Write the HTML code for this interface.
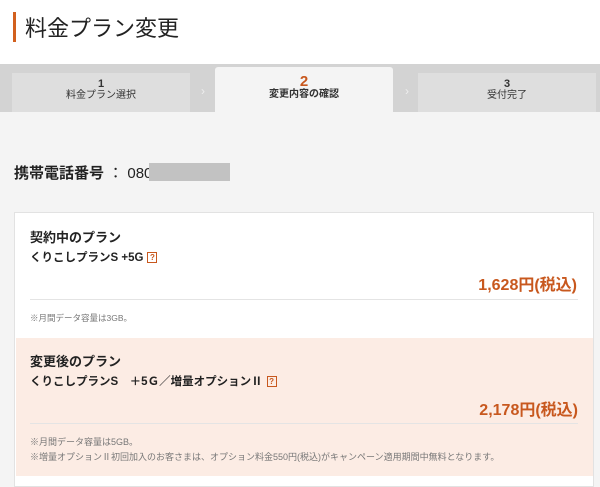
<!DOCTYPE html>
<html><head><meta charset="utf-8"><style>
*{margin:0;padding:0;box-sizing:border-box}
body{width:600px;height:487px;overflow:hidden;background:#f4f4f4;font-family:"Liberation Sans","Noto Sans CJK JP",sans-serif;color:#222;position:relative}
.abs{position:absolute;white-space:nowrap}
.top{position:absolute;left:0;top:0;width:600px;height:64px;background:#fff}
.bar{position:absolute;left:13px;top:12px;width:3px;height:30px;background:#d2601e}
.tabs{position:absolute;left:0;top:64px;width:600px;height:48px;background:#d3d3d3}
.tab{position:absolute;top:9px;height:39px;width:178px;background:#dedede;text-align:center;font-size:10px;line-height:12px;padding-top:5px;color:#333}
.tab b{display:block;font-size:11px}
.act{top:3px;height:45px;background:#f4f4f4;border-radius:3px 3px 0 0;padding-top:7px;font-weight:bold}
.act b{color:#c8581e;font-size:15px;line-height:15px}
.arr{position:absolute;top:20px;color:#eee;font-size:12px}
.card{position:absolute;left:14px;top:212px;width:580px;height:275px;background:#fff;border:1px solid #e2e2e2}
.pink{position:absolute;left:1px;top:125px;width:577px;height:138px;background:#fcece4}
.h{font-size:13px;font-weight:bold}
.p{font-size:11.5px;font-weight:bold}
.pr{font-size:16px;font-weight:bold;color:#c8581e;right:16px}
.n{font-size:8.5px;color:#777}
.hr{position:absolute;left:15px;width:548px;height:1px;background:#e4e4e4}
.q{display:inline-block;width:10px;height:11px;border:1px solid #c8581e;color:#c8581e;font-size:8px;line-height:9px;text-align:center;vertical-align:middle;margin-left:4px}
</style></head><body>
<div class="top"><div class="bar"></div><div class="abs" style="left:25px;top:11px;font-size:22px;color:#222">料金プラン変更</div></div>
<div class="tabs">
<div class="tab" style="left:12px"><b>1</b>料金プラン選択</div>
<div class="arr" style="left:201px">›</div>
<div class="tab act" style="left:215px"><b>2</b>変更内容の確認</div>
<div class="arr" style="left:405px">›</div>
<div class="tab" style="left:418px"><b>3</b>受付完了</div>
</div>
<div class="abs" style="left:14px;top:162px;font-size:15px"><b>携帯電話番号</b> ： 080</div>
<div class="abs" style="left:149px;top:163px;width:81px;height:18px;background:#c2c2c2"></div>
<div class="card">
<div class="abs h" style="left:15px;top:14px">契約中のプラン</div>
<div class="abs p" style="left:15px;top:36px">くりこしプランS +5G<span class="q">?</span></div>
<div class="abs pr" style="top:58px">1,628円(税込)</div>
<div class="hr" style="top:86px"></div>
<div class="abs n" style="left:15px;top:99px">※月間データ容量は3GB。</div>
<div class="pink">
<div class="abs h" style="left:14px;top:13px">変更後のプラン</div>
<div class="abs p" style="left:14px;top:35px">くりこしプランS　＋5Ｇ／増量オプションⅡ<span class="q">?</span></div>
<div class="abs pr" style="top:58px;right:15px">2,178円(税込)</div>
<div class="hr" style="top:85px;left:14px"></div>
<div class="abs n" style="left:14px;top:97px;font-size:9px">※月間データ容量は5GB。</div>
<div class="abs n" style="left:14px;top:112px;font-size:9px">※増量オプションⅡ初回加入のお客さまは、オプション料金550円(税込)がキャンペーン適用期間中無料となります。</div>
</div>
</div>
</body></html>
